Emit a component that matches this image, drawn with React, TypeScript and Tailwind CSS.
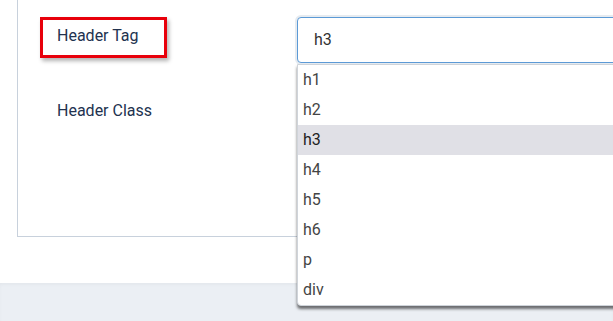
import { useState } from "react";

const options = ["h1", "h2", "h3", "h4", "h5", "h6", "p", "div"];

export default function App() {
  const [value] = useState("h3");

  return (
    <div className="relative w-[613px] h-[321px] overflow-hidden bg-white font-['Roboto',sans-serif]">
      {/* Settings panel */}
      <div className="ml-[17px] w-[800px] h-[237px] border-l border-b border-[#c8d1dc]">
        <div className="grid grid-cols-[279px_1fr] pt-[17px]">
          <div className="pl-[22px]">
            <div className="w-[127px] h-[41px] border-[3px] border-[#e8000b] shadow-[2px_3px_4px_rgba(0,0,0,0.3)] pl-[14px] flex items-center">
              <span className="text-[16px] text-[#22324f] -mt-[3px]">Header Tag</span>
            </div>
            <div className="pl-[17px] mt-[41px] text-[16px] text-[#22324f]">Header Class</div>
          </div>

          {/* Select input */}
          <div className="relative">
            <div className="h-[46px] rounded-[4px] border border-[#5c9ad6] ring-2 ring-[#e6ebf0] bg-white flex items-center pl-[16px] text-[16px] text-[#333]">
              {value}
            </div>

            {/* Open dropdown list */}
            <div className="absolute left-0 top-[47px] w-[400px] bg-white border border-[#cfd4da] rounded-b-[4px] shadow-[0_3px_3px_rgba(0,0,0,0.55)] z-10">
              {options.map((opt) => (
                <div
                  key={opt}
                  className={
                    opt === value
                      ? "h-[30px] flex items-center pl-[5px] text-[16px] text-[#222] bg-[#e0e0e6]"
                      : "h-[30px] flex items-center pl-[5px] text-[16px] text-[#444]"
                  }
                >
                  {opt}
                </div>
              ))}
            </div>
          </div>
        </div>
      </div>

      {/* Footer band */}
      <div className="mt-[46px] h-[38px] bg-[#ebeff4] shadow-[inset_0_2px_3px_rgba(0,0,0,0.03)]" />
    </div>
  );
}
